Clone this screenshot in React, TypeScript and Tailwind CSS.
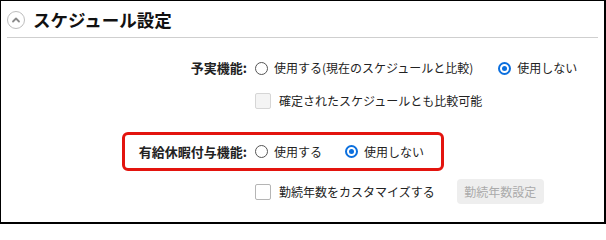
const Radio = ({ checked }: { checked?: boolean }) =>
  checked ? (
    <span className="flex h-[13px] w-[13px] shrink-0 items-center justify-center rounded-full border-2 border-[#0b6fde]">
      <span className="h-[5px] w-[5px] rounded-full bg-[#0b6fde]" />
    </span>
  ) : (
    <span className="h-[13px] w-[13px] shrink-0 rounded-full border border-[#555]" />
  );

const Option = ({ label, checked }: { label: string; checked?: boolean }) => (
  <label className="flex items-center gap-[6px]">
    <Radio checked={checked} />
    <span>{label}</span>
  </label>
);

const Check = ({ label, disabled }: { label: string; disabled?: boolean }) => (
  <label className="flex items-center gap-[8px]">
    <span
      className={
        disabled
          ? "h-[16px] w-[16px] shrink-0 rounded-[2px] border border-[#d6d6d6] bg-[#f4f4f4]"
          : "h-[16px] w-[16px] shrink-0 rounded-[2px] border border-[#b5b5b5] bg-white"
      }
    />
    <span>{label}</span>
  </label>
);

export default function App() {
  return (
    <div
      className="h-[224px] w-[606px] border border-r-2 border-b-2 border-black bg-white text-[12px] text-[#222]"
      style={{ fontFamily: '"Noto Sans CJK JP", "Noto Sans", sans-serif' }}
    >
      <div className="mx-[6px] flex h-[37px] items-center gap-[8px] border-b border-[#cfcfcf] pt-[1px]">
        <span className="flex h-[18px] w-[18px] items-center justify-center rounded-full border border-[#bdbdbd]">
          <svg width="10" height="10" viewBox="0 0 10 10" fill="none">
            <path d="M2 6.5 L5 3.5 L8 6.5" stroke="#8a8a8a" strokeWidth="1.8" strokeLinecap="round" strokeLinejoin="round" />
          </svg>
        </span>
        <h2 className="text-[17.5px] font-bold leading-none text-[#111]">スケジュール設定</h2>
      </div>

      <div className="mt-[21px] flex h-[18px] items-center">
        <div className="w-[246px] text-right text-[13px] font-bold">予実機能:</div>
        <div className="ml-[8px] flex items-center gap-[25px]">
          <Option label="使用する(現在のスケジュールと比較)" />
          <Option label="使用しない" checked />
        </div>
      </div>

      <div className="mt-[15px] flex h-[18px] items-center pl-[254px]">
        <Check label="確定されたスケジュールとも比較可能" disabled />
      </div>

      <div className="ml-[121px] mt-[22px] flex h-[39px] w-[322px] items-center rounded-[6px] border-[3px] border-[#e3140e] pl-[5px]">
        <div className="w-[117px] text-right text-[13px] font-bold">有給休暇付与機能:</div>
        <div className="ml-[8px] flex items-center gap-[23px]">
          <Option label="使用する" />
          <Option label="使用しない" checked />
        </div>
      </div>

      <div className="mt-[8px] flex h-[25px] items-center gap-[22px] pl-[254px]">
        <Check label="勤続年数をカスタマイズする" />
        <button className="h-[25px] w-[87px] rounded-[4px] bg-[#eeeeee] text-[12px] text-[#aaaaaa]">
          勤続年数設定
        </button>
      </div>
    </div>
  );
}
